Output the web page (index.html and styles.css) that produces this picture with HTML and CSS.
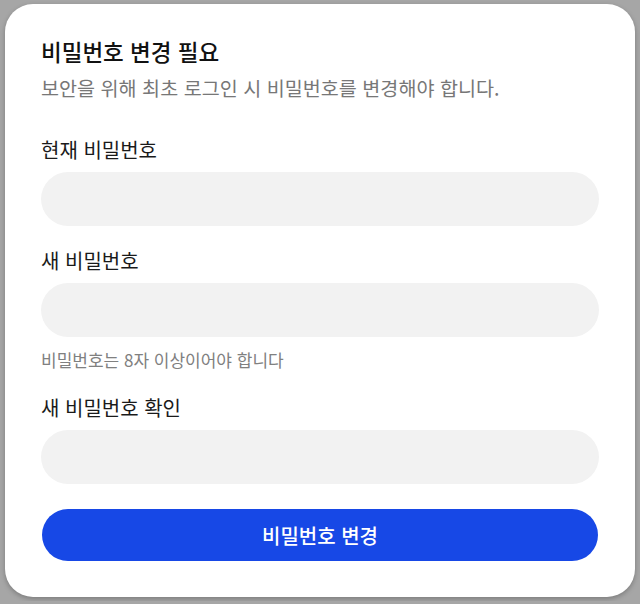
FILE: index.html
```html
<!DOCTYPE html>
<html lang="ko">
<head>
<meta charset="utf-8">
<link rel="stylesheet" href="styles.css">
</head>
<body>
<div class="card">
  <h1 class="title">비밀번호 변경 필요</h1>
  <p class="subtitle">보안을 위해 최초 로그인 시 비밀번호를 변경해야 합니다.</p>
  <div class="field first">
    <label class="label">현재 비밀번호</label>
    <div class="input"></div>
  </div>
  <div class="field">
    <label class="label">새 비밀번호</label>
    <div class="input"></div>
    <p class="hint">비밀번호는 8자 이상이어야 합니다</p>
  </div>
  <div class="field tight">
    <label class="label">새 비밀번호 확인</label>
    <div class="input"></div>
  </div>
  <button class="submit">비밀번호 변경</button>
</div>
</body>
</html>
```
FILE: styles.css
```css
html, body {
  margin: 0;
  padding: 0;
}
body {
  background: #a6a6a6;
  padding: 4px 5px;
  font-family: "Noto Sans CJK KR", "Noto Sans", sans-serif;
}
.card {
  width: 630px;
  height: 593px;
  box-sizing: border-box;
  background: #ffffff;
  border-radius: 28px;
  box-shadow: 0 2px 5px rgba(0, 0, 0, 0.25);
  padding: 32px 36px 36px;
  display: flex;
  flex-direction: column;
}
.title {
  margin: 0;
  font-size: 22.5px;
  line-height: 30px;
  font-weight: 500;
  color: #111111;
}
.subtitle {
  margin: 10px 0 0;
  font-size: 19.6px;
  line-height: 24px;
  font-weight: 400;
  color: #777777;
}
.field {
  display: flex;
  flex-direction: column;
  margin-top: 23px;
}
.field.first {
  margin-top: 38px;
}
.field.tight {
  margin-top: 26px;
}
.label {
  font-size: 20px;
  line-height: 24px;
  font-weight: 400;
  color: #1a1a1a;
  margin-bottom: 10px;
}
.input {
  height: 54px;
  border-radius: 27px;
  background: #f2f2f2;
}
.hint {
  margin: 13px 0 0;
  font-size: 17px;
  line-height: 20px;
  color: #808080;
}
.submit {
  margin-top: 25px;
  height: 52px;
  border: none;
  border-radius: 26px;
  background: #1748e6;
  color: #ffffff;
  font-family: inherit;
  font-size: 20px;
  font-weight: 500;
  padding: 0;
  margin-left: 1px;
  margin-right: 1px;
}
```
